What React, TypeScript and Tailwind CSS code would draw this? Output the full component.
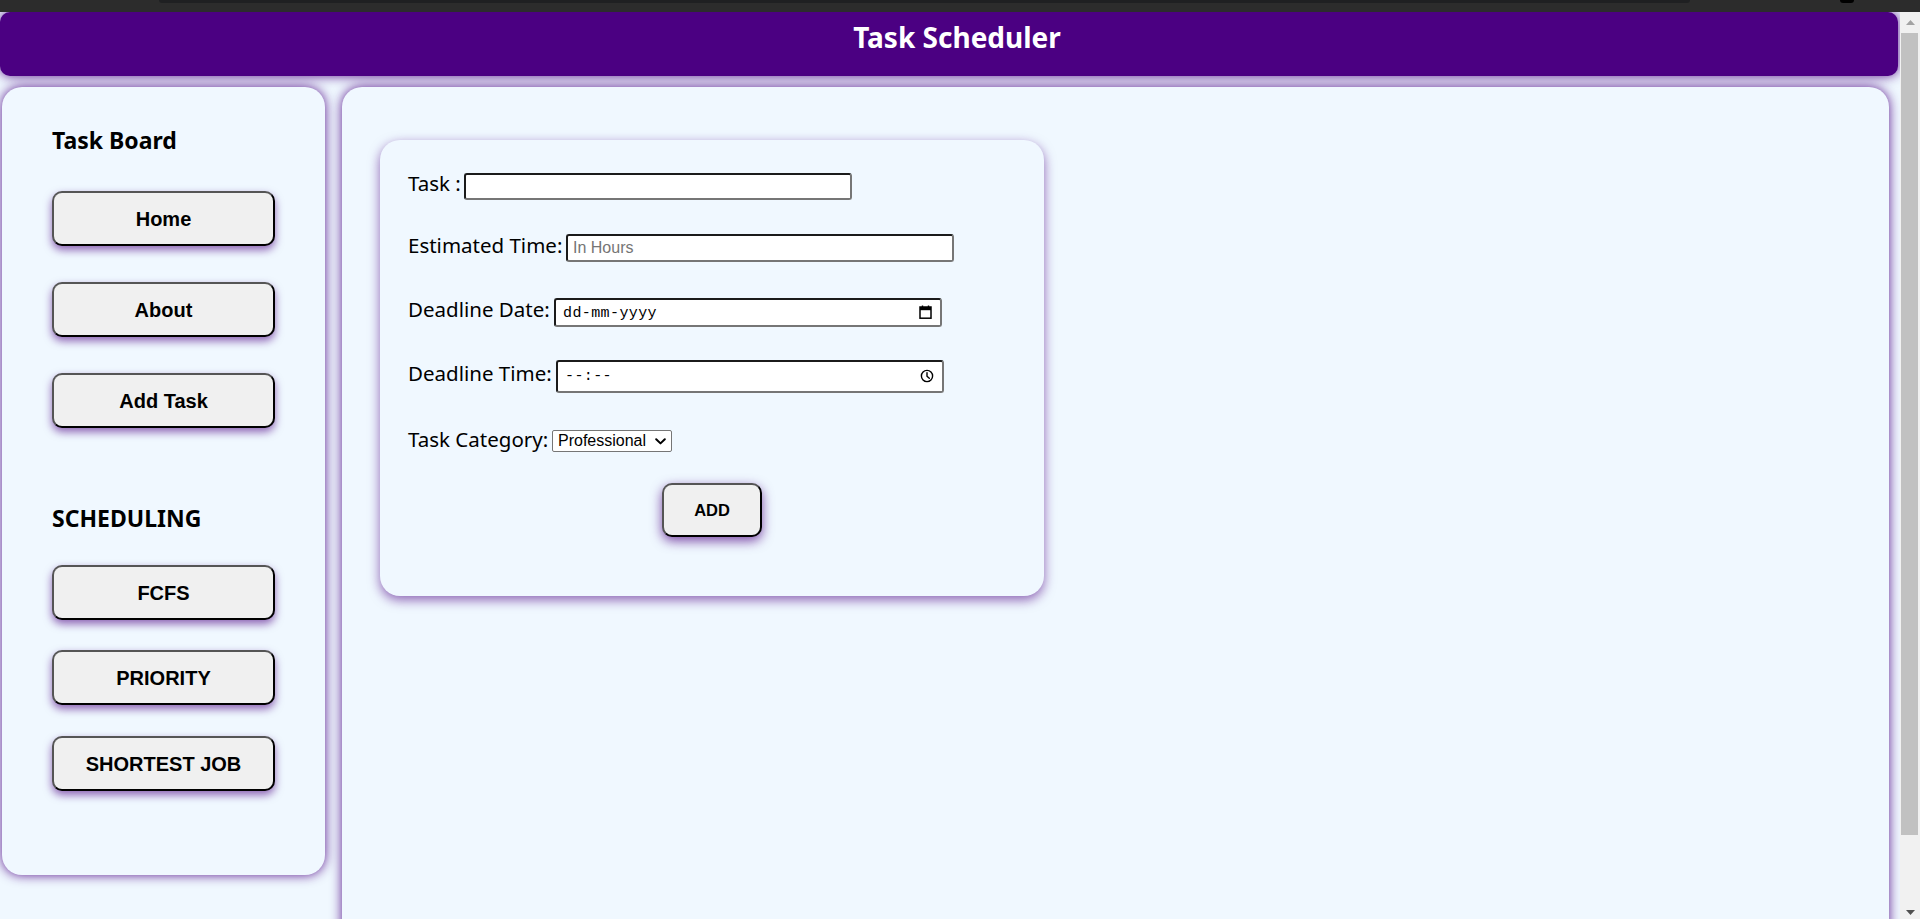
import React from "react";

const inset =
  "border-2 border-t-[#1b1b1b] border-l-[#1b1b1b] border-r-[#767676] border-b-[#767676] rounded-[3px] bg-white";
const navBtn =
  "w-full h-[55px] shrink-0 flex items-center justify-center rounded-[10px] border-2 border-t-[#555555] border-l-[#555555] border-r-black border-b-black bg-[#f0f0f0] shadow-[0_4px_8px_rgba(75,0,130,0.6)] font-['Liberation_Sans',Arial,sans-serif] font-bold text-[20px] text-black";

function CalendarIcon() {
  return (
    <svg width="13" height="14" viewBox="0 0 13 14" fill="none">
      <path d="M3.5 0.5V2.5M9.5 0.5V2.5" stroke="#000" strokeWidth="1.4" />
      <rect x="1" y="2" width="11" height="11.2" stroke="#000" strokeWidth="1.5" />
      <rect x="1" y="2" width="11" height="3.2" fill="#000" />
    </svg>
  );
}

function ClockIcon() {
  return (
    <svg width="14" height="14" viewBox="0 0 14 14" fill="none">
      <circle cx="7" cy="7" r="5.6" stroke="#000" strokeWidth="1.4" />
      <path d="M7 3.6V7.2L9.3 9.3" stroke="#000" strokeWidth="1.4" strokeLinecap="round" strokeLinejoin="round" />
    </svg>
  );
}

function Chevron() {
  return (
    <svg width="11" height="7" viewBox="0 0 11 7" fill="none">
      <path d="M1.2 1.2L5.5 5.4L9.8 1.2" stroke="#000" strokeWidth="2" strokeLinecap="round" strokeLinejoin="round" />
    </svg>
  );
}

export default function App() {
  return (
    <div className="w-[1920px] h-[919px] overflow-hidden flex flex-col bg-[#f0f8ff]">
      {/* browser chrome remnant */}
      <div className="h-[12px] shrink-0 bg-[#2c2c2c] flex items-start">
        <div className="ml-[159px] w-[1531px] h-[3px] bg-[#1f2022] rounded-b-[3px]" />
        <div className="ml-[150px] w-[14px] h-[3px] bg-black rounded-b-full" />
      </div>

      <div className="flex-1 flex min-h-0">
        {/* page */}
        <div className="w-[1900px] h-full overflow-hidden bg-[#f0f8ff] font-['Noto_Sans',sans-serif] text-black">
          <header className="mr-[2px] h-[64px] rounded-[10px] bg-[#4b0082] shadow-[0_0_12px_rgba(75,0,130,0.9)] pt-[6px] pl-[16px] text-center">
            <h1 className="text-[28px] leading-[38px] font-bold text-white">Task Scheduler</h1>
          </header>

          <div className="flex items-start mt-[11px]">
            {/* sidebar */}
            <aside className="ml-[2px] w-[323px] h-[788px] shrink-0 rounded-[20px] bg-[#f0f8ff] shadow-[0_0_12px_rgba(75,0,130,0.9)] px-[50px] pt-[37px] flex flex-col">
              <h2 className="text-[23px] leading-[32px] font-bold">Task Board</h2>
              <button className={`${navBtn} mt-[35px]`}>Home</button>
              <button className={`${navBtn} mt-[36px]`}>About</button>
              <button className={`${navBtn} mt-[36px]`}>Add Task</button>
              <h2 className="mt-[74px] text-[23px] leading-[32px] font-bold">SCHEDULING</h2>
              <button className={`${navBtn} mt-[31px]`}>FCFS</button>
              <button className={`${navBtn} mt-[30px]`}>PRIORITY</button>
              <button className={`${navBtn} mt-[31px]`}>SHORTEST JOB</button>
            </aside>

            {/* main */}
            <main className="ml-[17px] w-[1547px] h-[900px] shrink-0 rounded-[20px] bg-[#f0f8ff] shadow-[0_0_12px_rgba(75,0,130,0.9)] pt-[53px] pl-[38px]">
              <div className="w-[664px] h-[456px] rounded-[20px] bg-[#f0f8ff] shadow-[0_4px_12px_rgba(75,0,130,0.6)] px-[28px] pt-[26px] flex flex-col text-[20.5px]">
                <div className="flex items-center h-[40px]">
                  <label className="w-[56px] shrink-0 whitespace-nowrap leading-[28px] mb-[6px]">Task :</label>
                  <input
                    type="text"
                    className={`w-[388px] h-[27px] ${inset} px-[5px] text-[16px] font-['Liberation_Sans',Arial,sans-serif] outline-none`}
                  />
                </div>

                <div className="flex items-center h-[40px] mt-[22px]">
                  <label className="w-[158px] shrink-0 whitespace-nowrap leading-[28px] mb-[6px]">Estimated Time:</label>
                  <input
                    type="text"
                    placeholder="In Hours"
                    className={`w-[388px] h-[28px] ${inset} px-[5px] text-[16px] font-['Liberation_Sans',Arial,sans-serif] placeholder:text-[#757575] outline-none`}
                  />
                </div>

                <div className="flex items-center h-[40px] mt-[24px]">
                  <label className="w-[146px] shrink-0 whitespace-nowrap leading-[28px] mb-[6px]">Deadline Date:</label>
                  <div className={`w-[388px] h-[29px] ${inset} flex items-center pl-[7px] pr-[8px]`}>
                    <span className="mt-[3px] font-['Liberation_Mono',monospace] text-[15px] leading-[18px] tracking-[0.4px]">dd-mm-yyyy</span>
                    <span className="ml-auto flex">
                      <CalendarIcon />
                    </span>
                  </div>
                </div>

                <div className="flex items-center h-[40px] mt-[24px]">
                  <label className="w-[148px] shrink-0 whitespace-nowrap leading-[28px] mb-[6px]">Deadline Time:</label>
                  <div className={`w-[388px] h-[33px] ${inset} flex items-center pl-[7px] pr-[8px]`}>
                    <span className="mt-[2px] font-['Liberation_Mono',monospace] text-[15px] leading-[18px] tracking-[0.4px]">--:--</span>
                    <span className="ml-auto flex">
                      <ClockIcon />
                    </span>
                  </div>
                </div>

                <div className="flex items-center h-[40px] mt-[25px]">
                  <label className="w-[144px] shrink-0 whitespace-nowrap leading-[28px] mb-[4px]">Task Category:</label>
                  <div className="w-[120px] h-[22px] border border-[#767676] rounded-[2px] bg-white flex items-center pl-[5px] pr-[5px] font-['Liberation_Sans',Arial,sans-serif] text-[16px] leading-[18px]">
                    <span>Professional</span>
                    <span className="ml-auto flex">
                      <Chevron />
                    </span>
                  </div>
                </div>

                <div className="flex justify-center mt-[22px]">
                  <button className="w-[100px] h-[54px] rounded-[10px] border-2 border-t-[#555555] border-l-[#555555] border-r-black border-b-black bg-[#f0f0f0] shadow-[0_4px_12px_rgba(75,0,130,0.7)] font-['Liberation_Sans',Arial,sans-serif] font-bold text-[16.5px] text-black">
                    ADD
                  </button>
                </div>
              </div>
            </main>
          </div>
        </div>

        {/* scrollbar */}
        <div className="w-[20px] h-full bg-[#f1f1f1] flex flex-col">
          <div className="h-[21px] shrink-0 flex items-center justify-center">
            <svg width="9" height="5" viewBox="0 0 9 5">
              <path d="M0 5L4.5 0L9 5Z" fill="#a3a3a3" />
            </svg>
          </div>
          <div className="ml-[1px] w-[17px] h-[802px] shrink-0 bg-[#c1c1c1]" />
          <div className="flex-1" />
          <div className="h-[14px] shrink-0 flex items-center justify-center">
            <svg width="9" height="5" viewBox="0 0 9 5">
              <path d="M0 0L4.5 5L9 0Z" fill="#505050" />
            </svg>
          </div>
        </div>
      </div>
    </div>
  );
}
